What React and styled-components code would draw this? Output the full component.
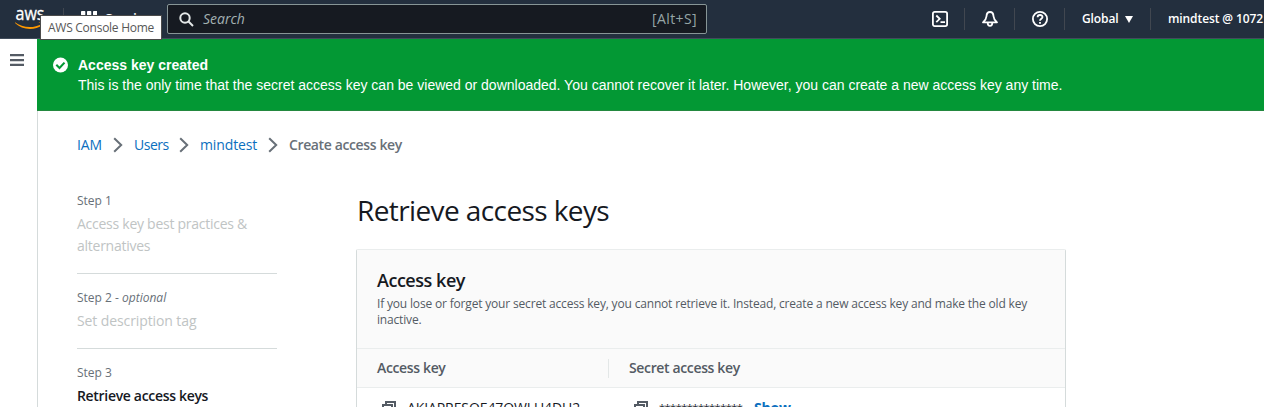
import React from 'react';
import styled, { createGlobalStyle } from 'styled-components';

const GlobalStyle = createGlobalStyle`
  * { box-sizing: border-box; }
  body {
    margin: 0;
    background: #fff;
    color: #16191f;
    font: 14px/22px 'Open Sans', 'Noto Sans', sans-serif;
    overflow: hidden;
  }
`;

const Page = styled.div`
  height: 407px;
  display: flex;
  flex-direction: column;
  overflow: hidden;
`;

const TopBar = styled.header`
  flex: none;
  height: 39px;
  display: flex;
  align-items: center;
  background: #232f3e;
  border-bottom: 1px solid #414d5c;
  color: #fff;
  white-space: nowrap;
`;

const HomeLink = styled.div`
  flex: none;
  position: relative;
  width: 63px;
  height: 38px;
  padding: 8px 0 0 15px;

  svg { display: block; }
`;

const Tooltip = styled.div`
  position: absolute;
  z-index: 2;
  left: 40px;
  top: 15px;
  width: 122px;
  height: 25px;
  padding-left: 7px;
  border: 1px solid #4b4b4b;
  background: #fff;
  color: #575757;
  font-size: 12px;
  line-height: 24px;
  letter-spacing: -0.26px;
`;

const Services = styled.div`
  flex: none;
  width: 103px;
  height: 38px;
  padding-left: 17px;
  display: flex;
  align-items: center;
  gap: 8px;
  font-size: 14px;
  font-weight: 600;
  letter-spacing: -0.3px;
`;

const SearchBox = styled.div`
  flex: none;
  width: 540px;
  height: 30px;
  padding: 0 9px 0 11px;
  display: flex;
  align-items: center;
  border: 1px solid #879596;
  border-radius: 2px;
  background: #161a21;
  color: #95a5a6;
`;

const Placeholder = styled.span`
  flex: 1;
  margin-left: 9px;
  font-style: italic;
  color: #a3b1b2;
`;

const Shortcut = styled.span`
  letter-spacing: 0.4px;
`;

const Tools = styled.nav`
  flex: 1;
  min-width: 0;
  margin-left: 208px;
  display: flex;
  align-items: center;
`;

const Tool = styled.div`
  flex: none;
  width: ${(p) => p.$width}px;
  padding-left: 17px;
  height: 22px;
  display: flex;
  align-items: center;
  font-size: 12px;
  font-weight: 600;
  letter-spacing: -0.1px;
`;

const Divider = styled.i`
  flex: none;
  width: 1px;
  height: 22px;
  background: #414750;
`;

const Caret = styled.i`
  margin-left: 6px;
  border: 4px solid transparent;
  border-top: 7px solid #fff;
  border-bottom: 0;
`;

const Body = styled.div`
  flex: 1;
  min-height: 0;
  display: flex;
`;

const Rail = styled.aside`
  flex: none;
  width: 38px;
  padding: 15px 0 0 10px;
  border-right: 1px solid #d5dbdb;

  svg { display: block; }
`;

const Main = styled.main`
  flex: 1;
  min-width: 0;
`;

const Banner = styled.section`
  height: 72px;
  margin-left: -1px;
  padding: 16px 0 0 16px;
  display: flex;
  gap: 10px;
  background: #039834;
  border-bottom: 1px solid #23883f;
  color: #fff;
  font: 14px/20px 'Liberation Sans', Arial, sans-serif;
  white-space: nowrap;
`;

const BannerIcon = styled.svg`
  flex: none;
  margin-top: 2px;
`;

const BannerTitle = styled.div`
  font-weight: 700;
`;

const Breadcrumbs = styled.nav`
  display: flex;
  align-items: center;
  height: 22px;
  margin: 23px 0 0 39px;
`;

const Crumb = styled.span`
  width: ${(p) => p.$width}px;
  color: #0b6fbe;
  letter-spacing: ${(p) => p.$tracking}px;
  white-space: nowrap;
`;

const CurrentCrumb = styled.span`
  color: #687078;
  font-weight: 600;
  letter-spacing: -0.38px;
`;

const Separator = styled.svg`
  flex: none;
  width: 10px;
  height: 16px;
  margin: 0 11px;
`;

const Columns = styled.div`
  display: flex;
  align-items: flex-start;
  padding-left: 39px;
`;

const Steps = styled.ol`
  flex: none;
  width: 200px;
  margin: 34px 79px 0 0;
  padding: 0;
  list-style: none;
`;

const Step = styled.li`
  padding-bottom: 16px;
  margin-bottom: 13px;
  border-bottom: 1px solid #d5dbdb;
`;

const StepNumber = styled.div`
  font-size: 12px;
  line-height: 22px;
  color: #687078;
`;

const StepTitle = styled.div`
  margin-top: 1px;
  color: ${(p) => (p.$active ? '#16191f' : '#c0c4c4')};
  font-weight: ${(p) => (p.$active ? 600 : 400)};
  letter-spacing: ${(p) => (p.$active ? -0.32 : p.$tracking)}px;
  white-space: pre-line;
`;

const Content = styled.div`
  width: 710px;
`;

const Title = styled.h1`
  margin: 36px 0 20px 1px;
  font-size: 28px;
  line-height: 37px;
  font-weight: 400;
  letter-spacing: -0.6px;
`;

const Card = styled.section`
  height: 200px;
  border: 1px solid #d5dbdb;
  border-top-color: #eaeded;
  border-radius: 2px 2px 0 0;
`;

const CardHeader = styled.div`
  height: 99px;
  padding: 19px 20px 0;
  background: #fafafa;
  border-bottom: 1px solid #eaeded;
`;

const CardTitle = styled.h2`
  margin: 0;
  font-size: 18px;
  line-height: 22px;
  font-weight: 600;
  letter-spacing: -0.47px;
`;

const Description = styled.p`
  margin: 5px 0 0;
  width: 660px;
  font-size: 12px;
  line-height: 16px;
  letter-spacing: -0.175px;
  color: #545b64;
`;

const TableHead = styled.div`
  height: 39px;
  display: flex;
  align-items: center;
  background: #fafafa;
  border-bottom: 1px solid #eaeded;
  color: #545b64;
  font-weight: 600;
`;

const HeadCell = styled.div`
  width: ${(p) => p.$width}px;
  height: 19px;
  padding-left: 20px;
  line-height: 18px;
  letter-spacing: -0.36px;
  border-left: ${(p) => (p.$ruled ? '1px solid #e3e7e7' : '0')};
`;

const TableRow = styled.div`
  display: flex;
  padding-top: 9px;
  white-space: nowrap;
`;

const Cell = styled.div`
  width: 252px;
  padding-left: 25px;
  display: flex;
`;

const CopyIcon = styled.svg`
  flex: none;
  margin: 4px 11px 0 0;
`;

const KeyText = styled.span`
  letter-spacing: -0.1px;
`;

const Masked = styled.span`
  width: 95px;
  font-size: 11px;
  letter-spacing: -0.5px;
`;

const ShowLink = styled.span`
  color: #0b6fbe;
  font-weight: 700;
  letter-spacing: -0.2px;
`;

const AwsWord = styled.text`
  font: 400 18px 'Open Sans', sans-serif;
`;

function AwsLogo() {
  return (
    <svg width="31" height="24" viewBox="0 0 31 24" fill="#fff">
      <AwsWord x="0.500" y="11.500" textLength="29" lengthAdjust="spacingAndGlyphs" stroke="#fff" strokeWidth=".3">aws</AwsWord>
      <path d="M0 14.300C7 19.700 18 20.900 27 16l.6.8C19.500 23.300 7 22.100 0 15.100z" fill="#f90" />
      <path d="M23.500 14.500c2-1.200 5-1.300 5.500-.7.500.7-.2 3.700-1.700 5.200.4-1.500 1.100-3.300.7-3.900-.4-.5-2.700-.5-4.500-.6z" fill="#f90" />
    </svg>
  );
}

function GridIcon() {
  return (
    <svg width="16" height="16" viewBox="0 0 16 16" fill="#fff">
      {[0, 6, 12].map((y) => [0, 6, 12].map((x) => <rect key={`${x}-${y}`} x={x} y={y} width="4.300" height="4.300" rx=".7" />))}
    </svg>
  );
}

function Copy() {
  return (
    <CopyIcon width="14" height="14" viewBox="0 0 14 14" fill="none" stroke="#545b64" strokeWidth="2">
      <path d="M4 4V1h9v9h-3" />
      <path d="M1 4h9v9H1z" />
    </CopyIcon>
  );
}

function Chevron() {
  return (
    <Separator viewBox="0 0 10 16" fill="none" stroke="#687078" strokeWidth="2">
      <path d="M1.200 1.200 8.200 8l-7 6.800" />
    </Separator>
  );
}

export default function App() {
  return (
    <Page>
      <GlobalStyle />
      <TopBar>
        <HomeLink>
          <AwsLogo />
          <Tooltip>AWS Console Home</Tooltip>
        </HomeLink>
        <Divider />
        <Services><GridIcon />Services</Services>
        <SearchBox>
          <svg width="15" height="15" viewBox="0 0 15 15" fill="none" stroke="#e4e8e8" strokeWidth="2">
            <circle cx="6" cy="6" r="4.700" />
            <path d="m9.500 9.500 4.500 4.500" />
          </svg>
          <Placeholder>Search</Placeholder>
          <Shortcut>[Alt+S]</Shortcut>
        </SearchBox>
        <Tools>
          <Tool $width={49}>
            <svg width="16" height="16" viewBox="0 0 16 16" fill="none" stroke="#fff" strokeWidth="1.800">
              <rect x=".9" y=".9" width="14.200" height="14.200" rx="1.800" />
              <path d="m4.300 4.500 3.400 3.300-3.400 3.300M8.500 11.200H13" />
            </svg>
          </Tool>
          <Divider />
          <Tool $width={49}>
            <svg width="16" height="16" viewBox="0 0 16 16" fill="none" stroke="#fff" strokeWidth="1.800" strokeLinejoin="round">
              <path d="M8 1C5.700 1 4.600 3 4.500 5.200 4.300 8.300 3 9.500 1 11.300h14c-2-1.800-3.300-3-3.500-6.100C11.400 3 10.300 1 8 1z" />
              <path d="M5.700 11.700c0 4.300 4.600 4.300 4.600 0" />
            </svg>
          </Tool>
          <Divider />
          <Tool $width={49}>
            <svg width="16" height="16" viewBox="0 0 16 16" fill="none" stroke="#fff" strokeWidth="1.800">
              <circle cx="8" cy="8" r="7.100" />
              <path d="M5.600 6.300c0-3.100 4.900-3 4.900-.2C10.500 7.800 8 7.700 8 9.700M8 11v1.800" />
            </svg>
          </Tool>
          <Divider />
          <Tool $width={85}>Global<Caret /></Tool>
          <Divider />
          <Tool $width={140}>mindtest @ 1072</Tool>
        </Tools>
      </TopBar>
      <Body>
        <Rail>
          <svg width="14" height="12" viewBox="0 0 14 12" fill="#545b64">
            <path d="M0 0h14v2.300H0zM0 4.900h14v2.300H0zM0 9.700h14V12H0z" />
          </svg>
        </Rail>
        <Main>
          <Banner>
            <BannerIcon width="15" height="16" viewBox="0 0 15 16">
              <circle cx="7.500" cy="8" r="7.500" fill="#fff" />
              <path d="m3.300 7.800 3.200 3.100 5-5.300" fill="none" stroke="#039834" strokeWidth="2.100" />
            </BannerIcon>
            <div>
              <BannerTitle>Access key created</BannerTitle>
              <div>This is the only time that the secret access key can be viewed or downloaded. You cannot recover it later. However, you can create a new access key any time.</div>
            </div>
          </Banner>
          <Breadcrumbs>
            <Crumb $width={25} $tracking={-0.12}>IAM</Crumb>
            <Chevron />
            <Crumb $width={34} $tracking={-0.5}>Users</Crumb>
            <Chevron />
            <Crumb $width={57} $tracking={-0.12}>mindtest</Crumb>
            <Chevron />
            <CurrentCrumb>Create access key</CurrentCrumb>
          </Breadcrumbs>
          <Columns>
            <Steps>
              <Step>
                <StepNumber>Step 1</StepNumber>
                <StepTitle $tracking={-0.26}>{'Access key best practices &\nalternatives'}</StepTitle>
              </Step>
              <Step>
                <StepNumber>Step 2 - <em>optional</em></StepNumber>
                <StepTitle $tracking={-0.1}>Set description tag</StepTitle>
              </Step>
              <Step>
                <StepNumber>Step 3</StepNumber>
                <StepTitle $active>Retrieve access keys</StepTitle>
              </Step>
            </Steps>
            <Content>
              <Title>Retrieve access keys</Title>
              <Card>
                <CardHeader>
                  <CardTitle>Access key</CardTitle>
                  <Description>If you lose or forget your secret access key, you cannot retrieve it. Instead, create a new access key and make the old key inactive.</Description>
                </CardHeader>
                <TableHead>
                  <HeadCell $width={251}>Access key</HeadCell>
                  <HeadCell $width={456} $ruled>Secret access key</HeadCell>
                </TableHead>
                <TableRow>
                  <Cell><Copy /><KeyText>AKIAPRESQE47OWLU4DU2</KeyText></Cell>
                  <Cell><Copy /><Masked>***************</Masked><ShowLink>Show</ShowLink></Cell>
                </TableRow>
              </Card>
            </Content>
          </Columns>
        </Main>
      </Body>
    </Page>
  );
}
